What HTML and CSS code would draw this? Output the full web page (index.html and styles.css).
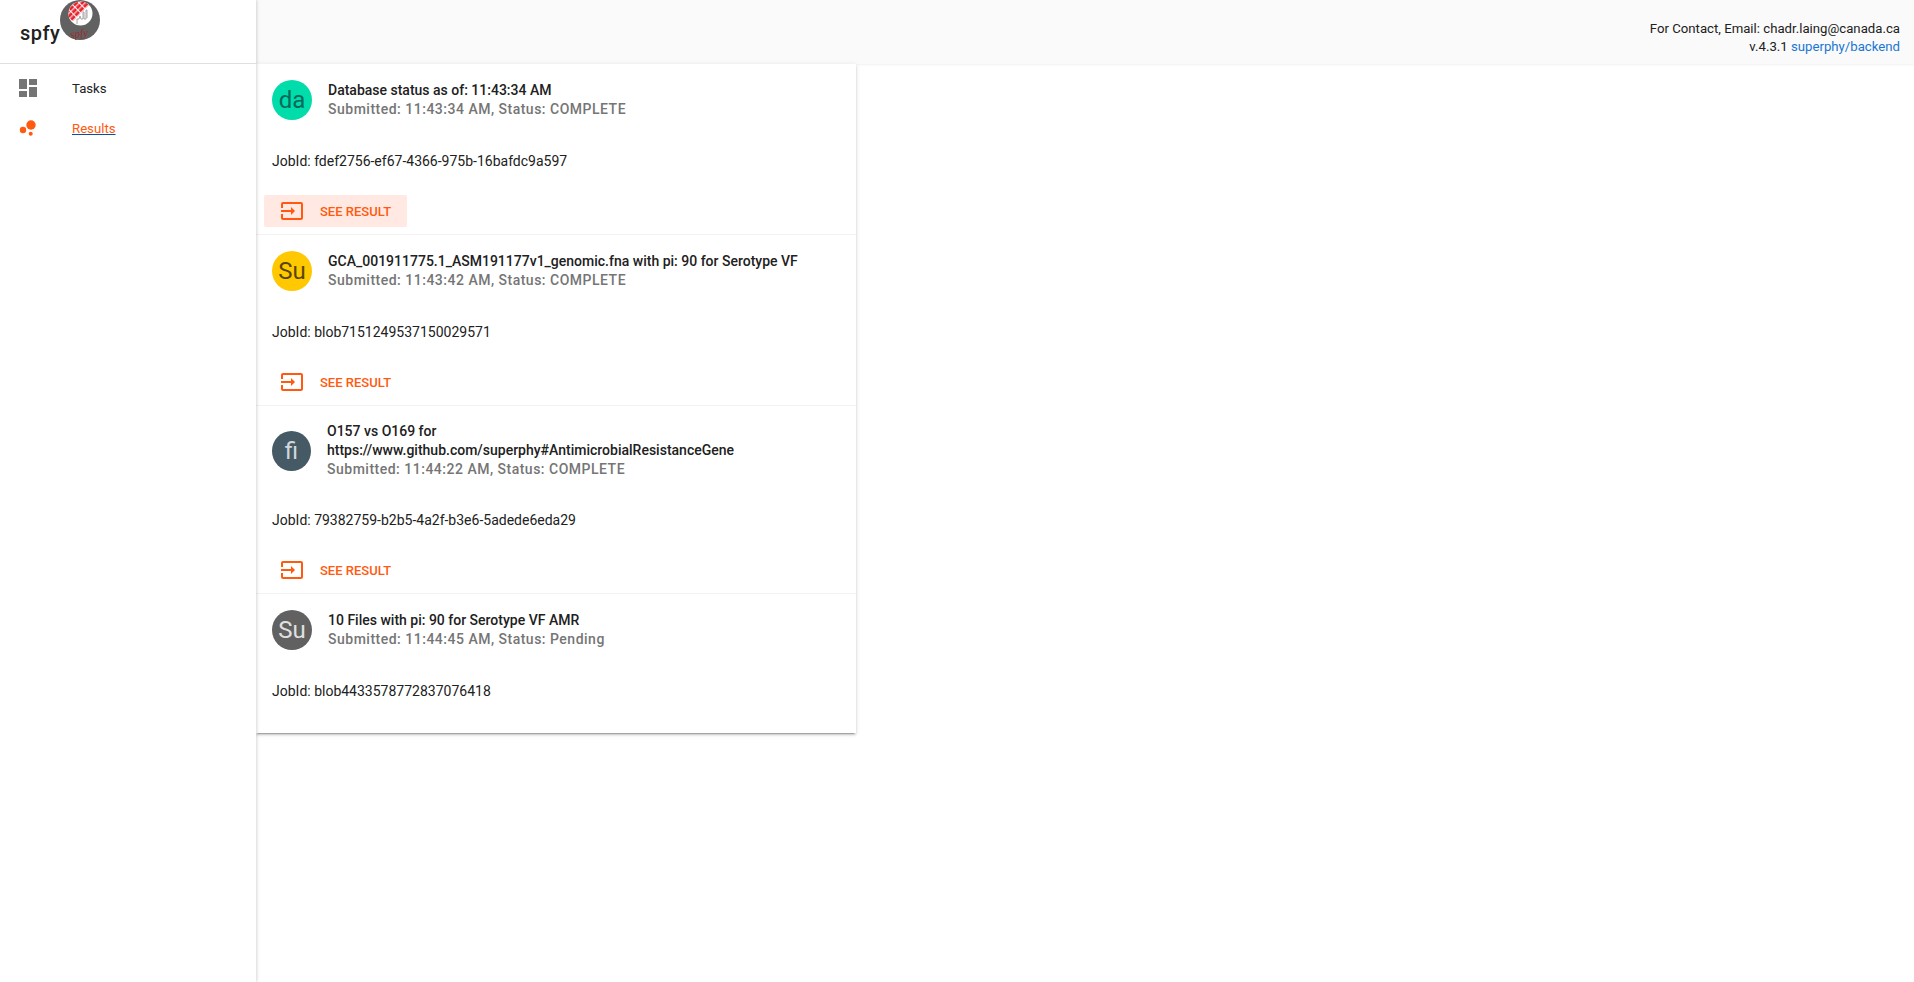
FILE: index.html
```html
<!DOCTYPE html>
<html lang="en">
<head>
    <meta charset="UTF-8">
    <title>spfy</title>
    <link rel="stylesheet" href="styles.css">
</head>
<body>
    <div class="layout">
        <aside class="sidebar">
            <div class="brand">
                <span class="brand-name">spfy</span>
                <svg class="brand-logo" viewBox="0 0 40 40">
                    <defs>
                        <pattern id="hatch" width="6" height="4" patternUnits="userSpaceOnUse" patternTransform="rotate(-45)">
                            <rect width="6" height="4" fill="#fff"/>
                            <rect y="0.3" width="5" height="3" fill="#e8202a"/>
                        </pattern>
                    </defs>
                    <circle cx="20" cy="20" r="20" fill="#616161"/>
                    <circle cx="20.5" cy="13.5" r="12" fill="#fff"/>
                    <path d="M12 22A12 12 0 0 1 29 5Z" fill="url(#hatch)"/>
                    <path d="M17 24v-5h2l1-3 1 3h2v-7h1v7h2v-9h1v8" stroke="#9e9e9e" stroke-width="0.9" fill="none"/>
                    <text class="logo-text" x="10" y="37" transform="rotate(-8 20 32)">spfy</text>
                </svg>
            </div>
            <nav class="nav">
                <a class="nav-item">
                    <svg class="nav-icon" viewBox="0 0 24 24"><path d="M3 13h8V3H3v10zm0 8h8v-6H3v6zm10 0h8V11h-8v10zm0-18v6h8V3h-8z" fill="#757575"/></svg>
                    <span>Tasks</span>
                </a>
                <a class="nav-item">
                    <svg class="nav-icon" viewBox="0 0 24 24"><circle cx="7" cy="14" r="3.2" fill="#ff5a0f"/><circle cx="14.7" cy="17.7" r="2" fill="#ff5a0f"/><circle cx="15" cy="9" r="4.7" fill="#ff5a0f"/></svg>
                    <span class="nav-link">Results</span>
                </a>
            </nav>
        </aside>

        <div class="content">
            <header class="topbar">
                <div>For Contact, Email: chadr.laing@canada.ca</div>
                <div>v.4.3.1 <a class="repo-link">superphy/backend</a></div>
            </header>

            <main class="card">
                <section class="job">
                    <div class="job-head">
                        <span class="avatar avatar-green">da</span>
                        <div class="job-text">
                            <div class="job-title">Database status as of: 11:43:34 AM</div>
                            <div class="job-sub">Submitted: 11:43:34 AM, Status: COMPLETE</div>
                        </div>
                    </div>
                    <p class="job-id">JobId: fdef2756-ef67-4366-975b-16bafdc9a597</p>
                    <a class="result-btn hover">
                        <svg class="result-icon" viewBox="0 0 24 24"><path d="M21 3.01H3c-1.1 0-2 .9-2 2V9h2V4.99h18v14.03H3V15H1v4.01c0 1.1.9 1.98 2 1.98h18c1.1 0 2-.88 2-1.98v-14a2 2 0 0 0-2-2zM11 16l4-4-4-4v3H1v2h10v3z" fill="#ff5a0f"/></svg>
                        SEE RESULT
                    </a>
                </section>

                <section class="job">
                    <div class="job-head">
                        <span class="avatar avatar-yellow">Su</span>
                        <div class="job-text">
                            <div class="job-title">GCA_001911775.1_ASM191177v1_genomic.fna with pi: 90 for Serotype VF</div>
                            <div class="job-sub">Submitted: 11:43:42 AM, Status: COMPLETE</div>
                        </div>
                    </div>
                    <p class="job-id">JobId: blob7151249537150029571</p>
                    <a class="result-btn">
                        <svg class="result-icon" viewBox="0 0 24 24"><path d="M21 3.01H3c-1.1 0-2 .9-2 2V9h2V4.99h18v14.03H3V15H1v4.01c0 1.1.9 1.98 2 1.98h18c1.1 0 2-.88 2-1.98v-14a2 2 0 0 0-2-2zM11 16l4-4-4-4v3H1v2h10v3z" fill="#ff5a0f"/></svg>
                        SEE RESULT
                    </a>
                </section>

                <section class="job">
                    <div class="job-head">
                        <span class="avatar avatar-slate">fi</span>
                        <div class="job-text">
                            <div class="job-title">O157 vs O169 for<br>https://www.github.com/superphy#AntimicrobialResistanceGene</div>
                            <div class="job-sub">Submitted: 11:44:22 AM, Status: COMPLETE</div>
                        </div>
                    </div>
                    <p class="job-id">JobId: 79382759-b2b5-4a2f-b3e6-5adede6eda29</p>
                    <a class="result-btn">
                        <svg class="result-icon" viewBox="0 0 24 24"><path d="M21 3.01H3c-1.1 0-2 .9-2 2V9h2V4.99h18v14.03H3V15H1v4.01c0 1.1.9 1.98 2 1.98h18c1.1 0 2-.88 2-1.98v-14a2 2 0 0 0-2-2zM11 16l4-4-4-4v3H1v2h10v3z" fill="#ff5a0f"/></svg>
                        SEE RESULT
                    </a>
                </section>

                <section class="job job-last">
                    <div class="job-head">
                        <span class="avatar avatar-grey">Su</span>
                        <div class="job-text">
                            <div class="job-title">10 Files with pi: 90 for Serotype VF AMR</div>
                            <div class="job-sub">Submitted: 11:44:45 AM, Status: Pending</div>
                        </div>
                    </div>
                    <p class="job-id">JobId: blob4433578772837076418</p>
                </section>
            </main>
        </div>
    </div>
</body>
</html>
```

FILE: styles.css
```css
* {
    margin: 0;
    padding: 0;
    box-sizing: border-box;
}

body {
    font-family: Roboto, "Liberation Sans", sans-serif;
    font-size: 14px;
    color: #212121;
    background: #fff;
}

.layout {
    display: flex;
    height: 982px;
    overflow: hidden;
}

.sidebar {
    width: 256px;
    flex-shrink: 0;
    background: #fff;
    box-shadow: 1px 0 3px rgba(0,0,0,0.16);
    z-index: 2;
}

.brand {
    height: 64px;
    padding-left: 20px;
    display: flex;
    align-items: flex-start;
    border-bottom: 1px solid #e0e0e0;
}

.brand-name {
    font-size: 20px;
    font-weight: 500;
    letter-spacing: 0.5px;
    line-height: 24px;
    margin-top: 21px;
}

.brand-logo {
    width: 40px;
    height: 40px;
}

.logo-text {
    font-family: "Liberation Serif", serif;
    font-style: italic;
    font-size: 11px;
    fill: #9a2f2f;
}

.nav {
    padding-top: 4px;
    font-size: 13.2px;
}

.nav-item {
    display: flex;
    align-items: center;
    height: 40px;
    padding-left: 16px;
}

.nav-icon {
    width: 24px;
    height: 24px;
    margin-right: 32px;
}

.nav-link {
    color: #ff5a0f;
    text-decoration: underline;
    text-decoration-color: #0b4f9e;
}

.content {
    flex: 1;
    min-width: 0;
}

.topbar {
    height: 64px;
    padding: 20px 14px 0 0;
    background: #fafafa;
    text-align: right;
    line-height: 18px;
    font-size: 13.2px;
    box-shadow: 0 1px 2px rgba(0,0,0,0.06);
}

.repo-link {
    color: #1976d2;
}

.card {
    width: 600px;
    height: 669px;
    background: #fff;
    box-shadow: 0 2px 2px 0 rgba(0,0,0,0.14), 0 3px 1px -2px rgba(0,0,0,0.2), 0 1px 5px 0 rgba(0,0,0,0.12);
}

.job {
    padding: 16px 0 0;
    border-bottom: 1px solid #f3f3f3;
}

.job-last {
    border-bottom: none;
}

.job-head {
    display: flex;
    align-items: center;
    padding-left: 16px;
    min-height: 40px;
}

.avatar {
    width: 40px;
    height: 40px;
    border-radius: 50%;
    flex-shrink: 0;
    display: flex;
    align-items: center;
    justify-content: center;
    font-size: 24px;
}

.avatar-green {
    background: #00dcaa;
    color: #00695c;
}

.avatar-yellow {
    background: #ffc800;
    color: #5a4500;
}

.avatar-slate {
    width: 39px;
    background: #455a64;
    color: #cfd8dc;
}

.avatar-grey {
    background: #616161;
    color: #e0e0e0;
}

.job-text {
    padding-left: 16px;
    line-height: 19px;
}

.job-title {
    font-weight: 500;
}

.job-sub {
    font-weight: 500;
    color: #757575;
    letter-spacing: 0.5px;
}

.job-id {
    padding: 32px 16px 0;
    line-height: 18px;
}

.result-btn {
    display: flex;
    align-items: center;
    width: 143px;
    height: 32px;
    margin: 25px 0 7px 8px;
    padding-left: 16px;
    border-radius: 2px;
    color: #ff5a0f;
    font-size: 13px;
    font-weight: 500;
}

.result-btn.hover {
    background: #ffe9e2;
}

.result-icon {
    width: 24px;
    height: 24px;
    margin-right: 16px;
}
```
